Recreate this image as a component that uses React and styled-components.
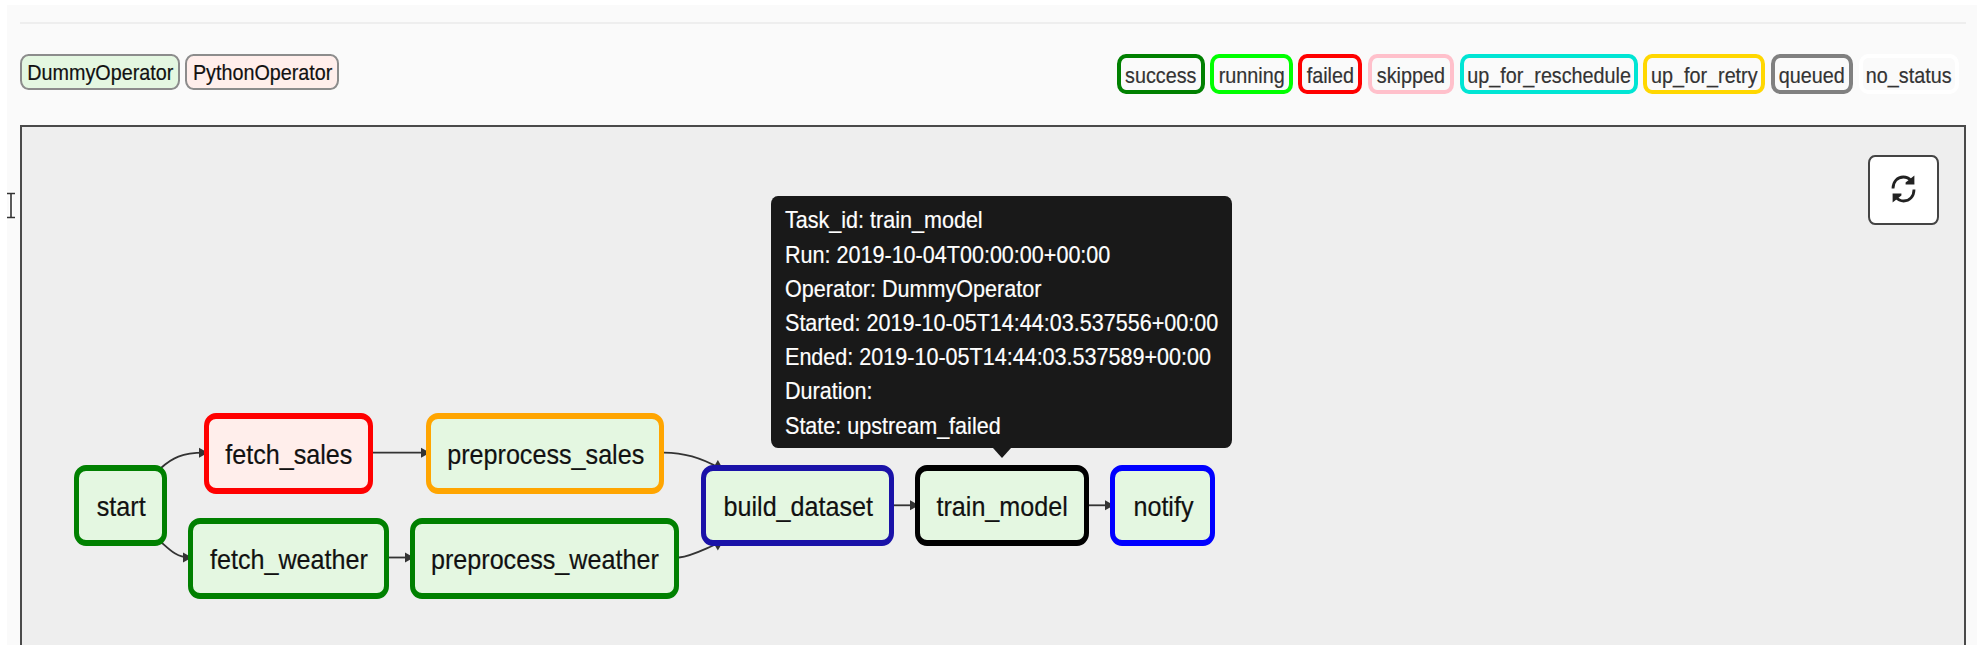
import React from "react";
import styled, { createGlobalStyle } from "styled-components";

const GlobalStyle = createGlobalStyle`
  * { box-sizing: border-box; }
  body {
    margin: 0;
    background: #fff;
    overflow: hidden;
    font-family: "Liberation Sans", Arial, Helvetica, sans-serif;
    -webkit-text-stroke: 0.2px;
  }
`;

const Page = styled.main`
  position: relative;
  width: 1969.5px;
  height: 640px;
  margin: 5px 0 0 7.3px;
  padding: 17px 10.5px 0 12.7px;
  display: flex;
  flex-direction: column;
  background: #fafafa;
`;

const Divider = styled.div`
  height: 2px;
  flex: none;
  background: #eee;
`;

const LegendBar = styled.div`
  display: flex;
  justify-content: space-between;
  align-items: flex-start;
  height: 101px;
  flex: none;
  padding: 30.3px 7.3px 0 0.3px;
`;

const LegendGroup = styled.div`
  display: flex;
  gap: ${(p) => p.$gap};
`;

const Label = styled.span`
  flex: none;
  white-space: nowrap;
  transform: scaleX(0.898);
`;

const OperatorTag = styled.div`
  display: flex;
  align-items: center;
  justify-content: center;
  width: ${(p) => p.$width}px;
  height: 35.4px;
  padding: 3px 0 0;
  border: 2px solid #8c8c8c;
  border-radius: 8.5px / 9.5px;
  background: ${(p) => p.$fill};
  color: #111;
  font-size: 22px;
`;

const StateTag = styled.div`
  display: flex;
  align-items: center;
  justify-content: center;
  width: ${(p) => p.$width}px;
  height: 39.7px;
  padding-top: 3px;
  border: 4px solid ${(p) => p.$color};
  border-radius: 9px / 10px;
  color: #333;
  font-size: 22px;
`;

const Canvas = styled.section`
  position: relative;
  flex: 1;
  border: 2px solid #4a4a4a;
  border-bottom: 0;
  background: #eee;
`;

const Edges = styled.svg`
  position: absolute;
  left: -22px;
  top: -127px;
  width: 1979px;
  height: 659px;
  fill: none;
  stroke: #333;
  stroke-width: 1.8;
`;

const Node = styled.div`
  position: absolute;
  left: ${(p) => p.$x - 22}px;
  top: ${(p) => p.$y - 127}px;
  width: ${(p) => p.$width}px;
  height: 81px;
  padding: 4px 0 0 1px;
  display: flex;
  align-items: center;
  justify-content: center;
  border: solid ${(p) => p.$color};
  border-width: 6px 5.4px;
  border-radius: 12px / 13px;
  background: ${(p) => p.$fill};
  color: #111;
  font-size: 28px;
`;

const Tooltip = styled.div`
  position: absolute;
  left: 749px;
  top: 69.4px;
  width: 461.4px;
  height: 251.4px;
  padding: 7px 14.3px;
  border-radius: 7px / 8px;
  background: #191919;
  color: #fff;
  font-size: 24px;
  line-height: 34.2px;

  &::after {
    content: "";
    position: absolute;
    left: 50%;
    top: 100%;
    margin-left: -9px;
    border: solid transparent;
    border-width: 10px 9px 0;
    border-top-color: #191919;
  }
`;

const TooltipLine = styled.div`
  width: max-content;
  white-space: nowrap;
  transform: scaleX(0.898);
  transform-origin: 0 50%;
`;

const RefreshButton = styled.button`
  position: absolute;
  top: 28.3px;
  right: 25.3px;
  width: 71px;
  height: 69.7px;
  padding: 0 0 3px;
  display: flex;
  align-items: center;
  justify-content: center;
  border: 2px solid #444;
  border-radius: 7px / 8px;
  background: #fff;
`;

const Cursor = styled.svg`
  position: absolute;
  left: -1.3px;
  top: 185px;
  width: 12px;
  height: 32px;
  fill: none;
`;

const GREEN = "#e4f7e1";
const ROSE = "#ffeeeb";

const operators = [
  ["DummyOperator", 159.7, GREEN],
  ["PythonOperator", 153.8, ROSE],
];

const states = [
  ["success", 88, "green"],
  ["running", 82.7, "lime"],
  ["failed", 64, "red"],
  ["skipped", 86.5, "pink"],
  ["up_for_reschedule", 178.3, "#00e5d4"],
  ["up_for_retry", 122, "gold"],
  ["queued", 82.3, "gray"],
  ["no_status", 100.5, "white"],
];

const nodes = [
  ["start", 74.3, 464.7, 92.7, "green", GREEN],
  ["fetch_sales", 204.3, 412.5, 168.7, "red", ROSE],
  ["fetch_weather", 188.4, 517.5, 200.5, "green", GREEN],
  ["preprocess_sales", 426, 412.5, 237.8, "orange", GREEN],
  ["preprocess_weather", 410.2, 517.5, 269.3, "green", GREEN],
  ["build_dataset", 701.2, 464.7, 192.5, "#1a12a8", GREEN],
  ["train_model", 915.4, 464.7, 173.3, "black", GREEN],
  ["notify", 1110.3, 464.7, 104.5, "blue", GREEN],
];

const details = [
  "Task_id: train_model",
  "Run: 2019-10-04T00:00:00+00:00",
  "Operator: DummyOperator",
  "Started: 2019-10-05T14:44:03.537556+00:00",
  "Ended: 2019-10-05T14:44:03.537589+00:00",
  "Duration:",
  "State: upstream_failed",
];

const edges = [
  "M161 468C172 458 182 452.7 204 452.7",
  "M161 542C170 550 177 557.5 189 557.5",
  "M373 452.7H426",
  "M389 557.5H410",
  "M664 452.7C684 452.7 700 457 719 468",
  "M679 557.5C692 556 702 550 719 543",
  "M893 505.3H915",
  "M1088 505.3H1110",
];

const arrows = [
  [208, 452.7, 0],
  [192, 557.5, 0],
  [430, 452.7, 0],
  [414, 557.5, 0],
  [723, 469, 31],
  [723, 541.5, -31],
  [919, 505.3, 0],
  [1114, 505.3, 0],
];

export default function App() {
  return (
    <>
      <GlobalStyle />
      <Page>
        <Divider />
        <LegendBar>
          <LegendGroup $gap="5.5px">
            {operators.map(([name, width, fill]) => (
              <OperatorTag key={name} $width={width} $fill={fill}>
                <Label>{name}</Label>
              </OperatorTag>
            ))}
          </LegendGroup>
          <LegendGroup $gap="5.4px">
            {states.map(([name, width, color]) => (
              <StateTag key={name} $width={width} $color={color}>
                <Label>{name}</Label>
              </StateTag>
            ))}
          </LegendGroup>
        </LegendBar>
        <Canvas>
          <Edges viewBox="0 0 1979 659">
            {edges.map((d) => (
              <path key={d} d={d} />
            ))}
            {arrows.map(([x, y, angle]) => (
              <path
                key={`${x}-${y}`}
                d="M0 0L-9 -5V5Z"
                fill="#333"
                stroke="none"
                transform={`translate(${x} ${y}) rotate(${angle})`}
              />
            ))}
          </Edges>
          {nodes.map(([name, x, y, width, color, fill]) => (
            <Node key={name} $x={x} $y={y} $width={width} $color={color} $fill={fill}>
              <Label>{name}</Label>
            </Node>
          ))}
          <Tooltip role="tooltip">
            {details.map((line) => (
              <TooltipLine key={line}>{line}</TooltipLine>
            ))}
          </Tooltip>
          <RefreshButton aria-label="Refresh">
            <svg width="25" height="28" viewBox="0 0 25 28" fill="none" stroke="#222" strokeWidth="2.8">
              <path d="M2 13.5C2 6.5 6.5 2 12.3 2C15.5 2 18 3.2 20 5.6" />
              <path d="M23 14.5C23 21.5 18.5 26 12.7 26C9.5 26 7 24.8 5 22.4" />
              <path d="M23.4 0.6V9.6H14.6V7.6Z" fill="#222" stroke="none" />
              <path d="M1.6 27.4V18.4H10.4V20.4Z" fill="#222" stroke="none" />
            </svg>
          </RefreshButton>
        </Canvas>
        <Cursor viewBox="0 0 12 32">
          <path d="M1 3.5H9M5 3.5V27.5M1 27.5H9" stroke="#fff" strokeWidth="4" />
          <path d="M1 3.5H9M5 3.5V27.5M1 27.5H9" stroke="#333" strokeWidth="1.6" />
        </Cursor>
      </Page>
    </>
  );
}
